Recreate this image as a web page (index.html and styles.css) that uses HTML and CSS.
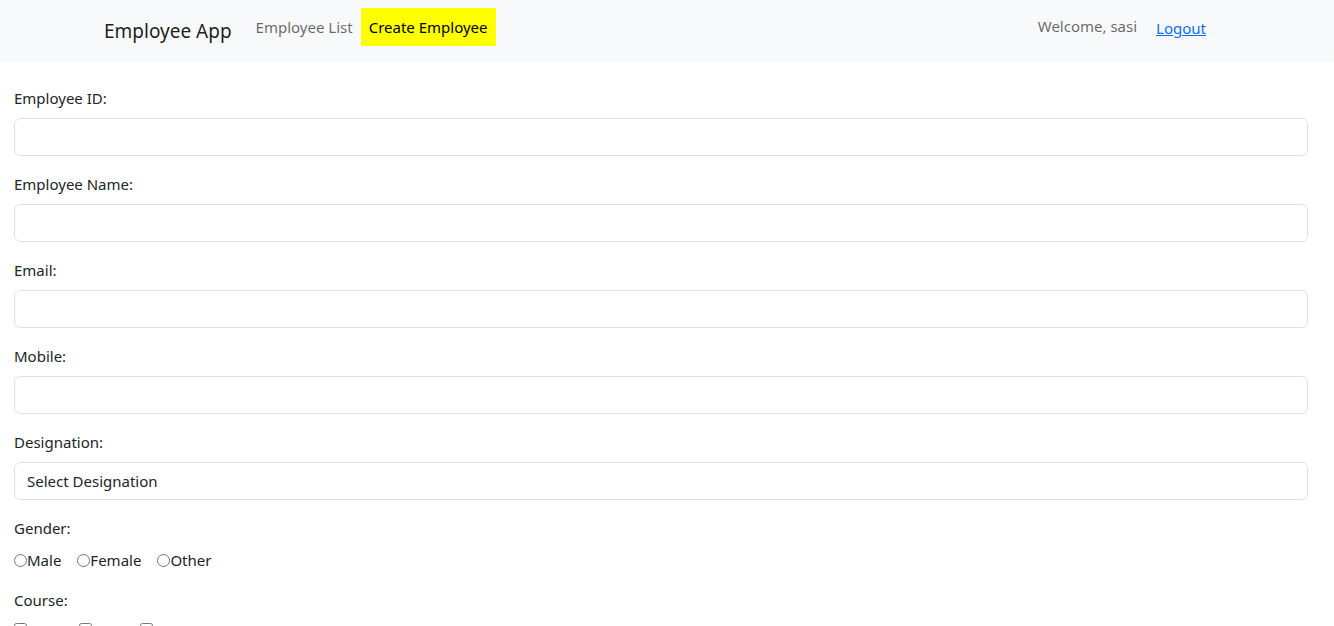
FILE: index.html
```html
<!DOCTYPE html>
<html>
<head>
<meta charset="utf-8">
<title>Employee App</title>
<link rel="stylesheet" href="styles.css">
</head>
<body>
<nav class="navbar">
  <div class="nav-left">
    <span class="brand">Employee App</span>
    <a class="nav-link">Employee List</a>
    <a class="nav-link active">Create Employee</a>
  </div>
  <div class="nav-right">
    <span class="welcome">Welcome, sasi</span>
    <a class="logout" href="#">Logout</a>
  </div>
</nav>
<main class="form">
  <div class="group">
    <label class="label">Employee ID:</label>
    <input class="control" type="text">
  </div>
  <div class="group">
    <label class="label">Employee Name:</label>
    <input class="control" type="text">
  </div>
  <div class="group">
    <label class="label">Email:</label>
    <input class="control" type="text">
  </div>
  <div class="group">
    <label class="label">Mobile:</label>
    <input class="control" type="text">
  </div>
  <div class="group">
    <label class="label">Designation:</label>
    <select class="control select"><option>Select Designation</option></select>
  </div>
  <div class="group">
    <label class="label">Gender:</label>
    <div class="choices">
      <label class="choice"><input type="radio" name="g" class="radio">Male</label>
      <label class="choice"><input type="radio" name="g" class="radio">Female</label>
      <label class="choice"><input type="radio" name="g" class="radio">Other</label>
    </div>
  </div>
  <div class="group">
    <label class="label">Course:</label>
    <div class="choices choices-tight">
      <label class="choice"><input type="checkbox" class="radio">MCA</label>
      <label class="choice"><input type="checkbox" class="radio">BCA</label>
      <label class="choice"><input type="checkbox" class="radio">BSC</label>
    </div>
  </div>
</main>
</body>
</html>
```
FILE: styles.css
```css
* { box-sizing: border-box; }
html, body { margin: 0; padding: 0; }
body {
  font-family: "Segoe UI", "Noto Sans", "Liberation Sans", sans-serif;
  font-size: 15px;
  line-height: 24px;
  color: #212529;
  background: #fff;
  overflow: hidden;
  height: 626px;
}
.navbar {
  height: 62px;
  background: #f8f9fa;
  display: flex;
  align-items: center;
  justify-content: space-between;
  padding: 0 128px 0 104px;
}
.nav-left { display: flex; align-items: center; }
.brand {
  font-size: 19px;
  line-height: 30px;
  color: rgba(0,0,0,0.9);
  margin-right: 16px;
  margin-top: -1px;
}
.nav-link {
  color: rgba(0,0,0,0.6);
  padding: 7px 8px;
  line-height: 24px;
  margin-top: -8px;
  text-decoration: none;
}
.nav-link.active {
  background: #ffff00;
  color: #000;
  margin-left: 0;
}
.nav-right { display: flex; align-items: center; }
.welcome { color: rgba(0,0,0,0.6); margin-right: 19px; margin-top: -11px; }
.logout { color: #0d6efd; text-decoration: underline; margin-top: -6px; }
.form { padding: 24px 26px 0 14px; }
.group { margin-bottom: 16px; }
.label { display: block; margin-bottom: 8px; }
.control {
  display: block;
  width: 100%;
  height: 38px;
  border: 1px solid #dee2e6;
  border-radius: 6px;
  padding: 6px 12px;
  font: inherit;
  color: #212529;
  background: #fff;
  -webkit-appearance: none;
  appearance: none;
}
.choices { display: flex; }
.choice { display: flex; align-items: center; margin-right: 16px; }
.radio { margin: 0; width: 13px; height: 13px; }
.choices-tight .choice { margin-right: 19px; }
.choices-tight .radio { margin-bottom: 6px; }
```
